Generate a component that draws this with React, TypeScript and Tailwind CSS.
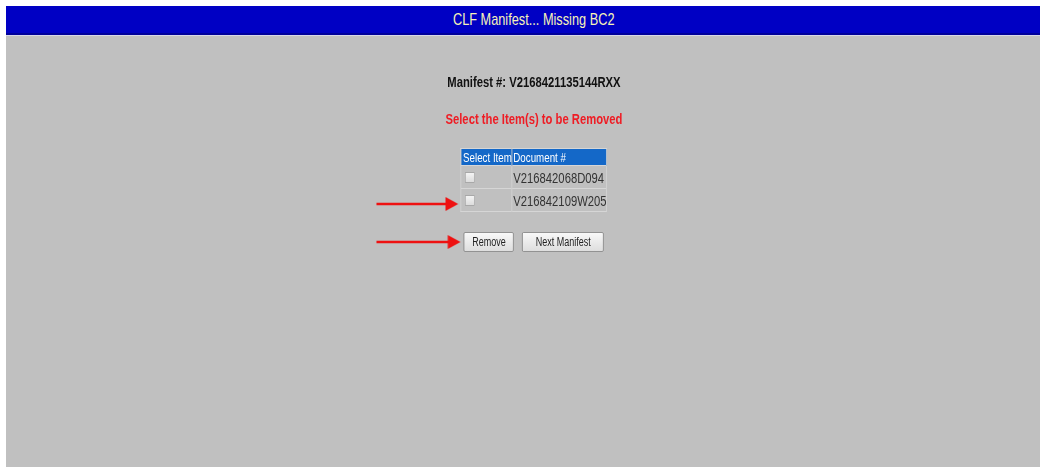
import React from "react";

const sans = "font-['Liberation_Sans',Arial,sans-serif]";

// Red pointer arrow used to call out the controls
function Arrow({ length }: { length: number }) {
  return (
    <svg width={length} height="14" viewBox={`0 0 ${length} 14`} className="block">
      <line x1="0" y1="7" x2={length - 12} y2="7" stroke="#ee1111" strokeWidth="2.5" />
      <polygon points={`${length - 17},0 ${length},7 ${length - 17},14`} fill="#ee1111" />
    </svg>
  );
}

export default function App() {
  const docs = ["V216842068D094", "V216842109W205"];

  return (
    <div className={`h-[467px] w-[1040px] bg-white pl-[6px] pt-[6px] ${sans}`}>
      <div className="flex h-full flex-col">
        {/* Title bar */}
        <div className="flex h-[29px] items-center justify-center border-b-2 border-[#00009a] bg-[#0000c4] pl-[22px] text-[17px] text-[#f6f2b8]">
          <span className="inline-block scale-x-75">CLF Manifest... Missing BC2</span>
        </div>
        <div className="h-px bg-[#d8d8e8]" />

        {/* Body */}
        <div className="flex flex-1 flex-col items-center bg-[#c0c0c0] pl-[22px] pt-[37px]">
          <div className="flex scale-x-75 flex-col items-center">
            <div className="text-[15px] font-bold leading-[18px] text-[#111]">Manifest #: V2168421135144RXX</div>
            <div className="mt-[19px] text-[15px] font-bold leading-[18px] text-[#ee1c24]">
              Select the Item(s) to be Removed
            </div>

            <table className="mt-[20px] w-[195px] table-fixed border-collapse border border-[#d6d6d6]">
              <thead>
                <tr className="h-[17px] bg-[#1468c8] text-[13px] leading-none text-white">
                  <th className="w-[68px] whitespace-nowrap border-r border-[#c8c8c8] px-[2px] text-left font-normal">
                    Select Item
                  </th>
                  <th className="whitespace-nowrap px-[1px] text-left font-normal">Document #</th>
                </tr>
              </thead>
              <tbody>
                {docs.map((d, i) => (
                  <tr key={d} className="h-[23px] border-t border-[#d6d6d6]">
                    <td className="relative border-r border-[#d6d6d6] pl-[5px]">
                      {i === 1 && (
                        <div className="absolute right-[100%] top-[8px] mr-[4px]">
                          <Arrow length={109} />
                        </div>
                      )}
                      <div className="h-[11px] w-[13px] border border-[#a8a8a8] bg-gradient-to-b from-[#f4f4f4] to-[#dcdcdc]" />
                    </td>
                    <td className="px-[1px] text-[15px] leading-none text-[#333]">{d}</td>
                  </tr>
                ))}
              </tbody>
            </table>

            <div className="relative mt-[20px] flex gap-[11px]">
              <div className="absolute right-[100%] top-[3px] mr-[4px]">
                <Arrow length={112} />
              </div>
              <button className="h-[20px] w-[67px] rounded-[2px] border border-[#8c8c8c] bg-gradient-to-b from-[#f8f8f8] to-[#dedede] text-[12px] leading-none text-[#222]">
                Remove
              </button>
              <button className="h-[20px] w-[109px] rounded-[2px] border border-[#8c8c8c] bg-gradient-to-b from-[#f8f8f8] to-[#dedede] text-[12px] leading-none text-[#222]">
                Next Manifest
              </button>
            </div>
          </div>
        </div>
      </div>
    </div>
  );
}
